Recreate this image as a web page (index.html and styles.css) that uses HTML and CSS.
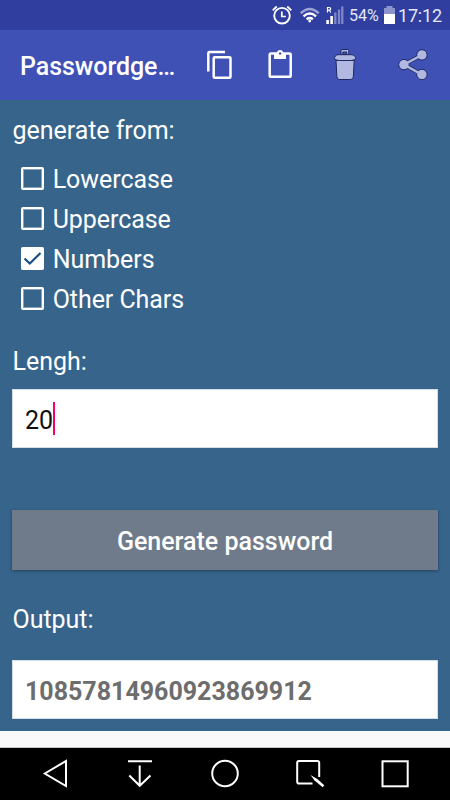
FILE: index.html
```html
<!DOCTYPE html>
<html lang="en">
<head>
<meta charset="utf-8">
<title>Passwordgenerator</title>
<link rel="stylesheet" href="styles.css">
</head>
<body>
<div class="screen">
  <div class="status">
    <svg class="status-icons" width="74" height="30" viewBox="270 0 74 30" fill="none" stroke="#fff">
      <circle cx="282" cy="15.700" r="7.800" stroke-width="1.900"/>
      <path d="M281.800 11.500v5h4" stroke-width="1.700"/>
      <path d="M272.700 10.300l4-3.800M291.300 10.300l-4-3.800" stroke-width="1.800"/>
      <path d="M300.700 13.300q9-8.600 18 0" stroke="#9ba3d5" stroke-width="2.600"/>
      <path d="M303.500 16.300q6.300-5.400 12.500 0M306.600 19.200q3.200-2.400 6.300 0" stroke-width="2.400"/>
      <circle cx="309.700" cy="21" r="1.400" fill="#fff" stroke="none"/>
      <path d="M327.600 20v4M331.600 16v8" stroke-width="2.600"/>
      <path d="M335.300 12.500V24M339 9.500V24M342.300 6.500V24" stroke="#7d87c8" stroke-width="2.300"/>
      <path d="M327.500 12.500v-5h1.700q1.500 0 1.500 1.300t-1.500 1.300h-1.700m1.700 0l1.700 2.400" stroke-width="1.200"/>
    </svg>
    <span class="percent">54%</span>
    <svg class="battery" width="13" height="30" viewBox="383 0 13 30">
      <path d="M384 8h2.500V6h6v2h2.500v6h-11z" fill="#8c94cd"/>
      <path d="M384 14h11v10h-11z" fill="#fff"/>
    </svg>
    <span class="clock">17:12</span>
  </div>
  <header class="appbar">
    <h1 class="title">Passwordge…</h1>
    <svg width="60" height="70" viewBox="190 30 60 70" fill="none" stroke="#fff" stroke-width="2.500">
      <path d="M225 52h-15.500q-1.200 0-1.200 1.200V71.500"/>
      <rect x="213.700" y="57.200" width="16.800" height="20.600" rx="1"/>
    </svg>
    <svg width="62" height="70" viewBox="250 30 62 70">
      <rect x="269.700" y="53.500" width="21" height="23.200" rx="1.300" fill="none" stroke="#fff" stroke-width="2.500"/>
      <path d="M274 53h2.700q.8-3 3.400-3t3.400 3h2.500v6h-12z" fill="#fff"/>
      <circle cx="280.100" cy="53.500" r="1.200" fill="#3f51b5"/>
    </svg>
    <svg width="67" height="70" viewBox="312 30 67 70" fill="#b2b9e1" stroke="#1d2864" stroke-width="1">
      <path d="M341 55.500v-5q0-1 1-1h5.800q1 0 1 1v5z"/>
      <path d="M336 60.500h18.200l-.9 16.500q-.2 2.500-3 2.500h-10.500q-2.700 0-2.900-2.500z"/>
      <path d="M334.500 59q-.3-3.500 3.500-4.300h14q4 .8 3.700 4.300-1.200 1.200-5 1.500h-11.200q-3.700-.3-5-1.500z"/>
      <path d="M342.800 52h4v2.500h-4z" fill="#3f51b5"/>
    </svg>
    <svg width="71" height="70" viewBox="379 30 71 70" fill="#b2b9e1">
      <path d="M421.800 55L404 64.600l17.800 10" fill="none" stroke="#1d2864" stroke-width="4"/>
      <g stroke="#1d2864" stroke-width="1"><circle cx="421.900" cy="54.900" r="5.200"/><circle cx="403.900" cy="64.600" r="5.200"/><circle cx="421.900" cy="74.500" r="5.200"/></g>
      <path d="M421.800 55L404 64.600l17.800 10" fill="none" stroke="#b2b9e1" stroke-width="2.500"/>
    </svg>
  </header>
  <main class="content">
    <p class="label">generate from:</p>
    <ul class="options">
      <li><span class="box"></span>Lowercase</li>
      <li><span class="box"></span>Uppercase</li>
      <li><span class="box checked"><svg width="23" height="23" viewBox="0 0 23 23"><path d="M3.500 11.500l5.300 5L19.500 6" fill="none" stroke="#174f86" stroke-width="2.200"/></svg></span>Numbers</li>
      <li><span class="box"></span>Other Chars</li>
    </ul>
    <p class="label length">Lengh:</p>
    <div class="field">20<span class="caret"></span></div>
    <div class="button">Generate password</div>
    <p class="label output">Output:</p>
    <div class="field result">10857814960923869912</div>
  </main>
  <div class="strip"></div>
  <nav class="nav">
    <svg width="85" height="52" viewBox="13 748 85 52"><path d="M44.800 773.500L66 761v25z"/></svg>
    <svg width="85" height="52" viewBox="98 748 85 52"><path d="M128 761.300h24M139.700 765.500v20M129.300 775.500l10.400 10.300 10.800-10.300"/></svg>
    <svg width="85" height="52" viewBox="183 748 85 52"><circle cx="225" cy="773.500" r="12.800"/></svg>
    <svg width="85" height="52" viewBox="268 748 85 52"><path d="M312.500 783.500h-13.500q-1.800 0-1.800-1.800v-18.900q0-1.800 1.800-1.800h18.400q1.800 0 1.800 1.800V777"/><path d="M310.500 775l4 5.500 8.200 6.800 1.600-2-7-6.300z" fill="#fff" stroke="none"/></svg>
    <svg width="85" height="52" viewBox="353 748 85 52"><rect x="382.500" y="761.300" width="25.200" height="25"/></svg>
  </nav>
</div>
</body>
</html>
```

FILE: styles.css
```css
* { box-sizing: border-box; margin: 0; padding: 0; }
body { font-family: Roboto, sans-serif; }
svg { display: block; flex: none; }
.screen { width: 450px; height: 800px; display: flex; flex-direction: column; overflow: hidden; }
.status { height: 30px; background: #303f9f; display: flex; padding-left: 270px; color: #e4e6f5; line-height: 32px; white-space: nowrap; }
.percent { width: 39px; padding-left: 5px; font-size: 16px; flex: none; }
.clock { padding-left: 2px; font-size: 18px; letter-spacing: -.2px; }
.appbar { height: 70px; background: #3f51b5; display: flex; color: #fff; }
.title { width: 190px; padding-left: 20px; font-size: 25px; font-weight: 500; line-height: 73px; white-space: nowrap; letter-spacing: -.06px; }
.content { height: 631px; background: #37648b; padding: 13px 12px 0; color: #fff; font-size: 25px; display: flex; flex-direction: column; }
.label { height: 36px; line-height: 36px; padding-left: .6px; letter-spacing: -.05px; }
.options { list-style: none; margin-top: 10px; letter-spacing: -.06px; }
.options li { display: flex; align-items: center; height: 40px; padding-left: 9px; gap: 8.7px; }
.box { width: 23px; height: 23px; border: 2px solid #fff; border-radius: 2px; margin-bottom: 2px; box-shadow: inset 0 0 0 1px rgba(255, 255, 255, .4); }
.box.checked { background: #fff; border: 0; }
.length { margin-top: 25px; }
.field { height: 59px; margin-top: 9px; padding: 3px 0 0 12px; background: #fff; color: #111; display: flex; align-items: center; border: 1px solid #d5dee7; }
.caret { width: 2px; height: 33px; background: #f50067; margin-bottom: 3px; }
.button { height: 60px; margin-top: 62px; background: #6f7b8a; display: flex; align-items: center; justify-content: center; font-weight: 500; padding-top: 2px; box-shadow: 0 1px 3px rgba(0, 0, 0, .35); }
.output { margin-top: 32px; }
.result { margin-top: 22px; color: #6d6d6d; font-weight: 700; }
.strip { height: 17px; background: #fafafa; border-bottom: 1px solid #c8c8c8; }
.nav { height: 52px; background: #000; display: flex; padding-left: 13px; }
.nav svg { fill: none; stroke: #fff; stroke-width: 2; }
```
